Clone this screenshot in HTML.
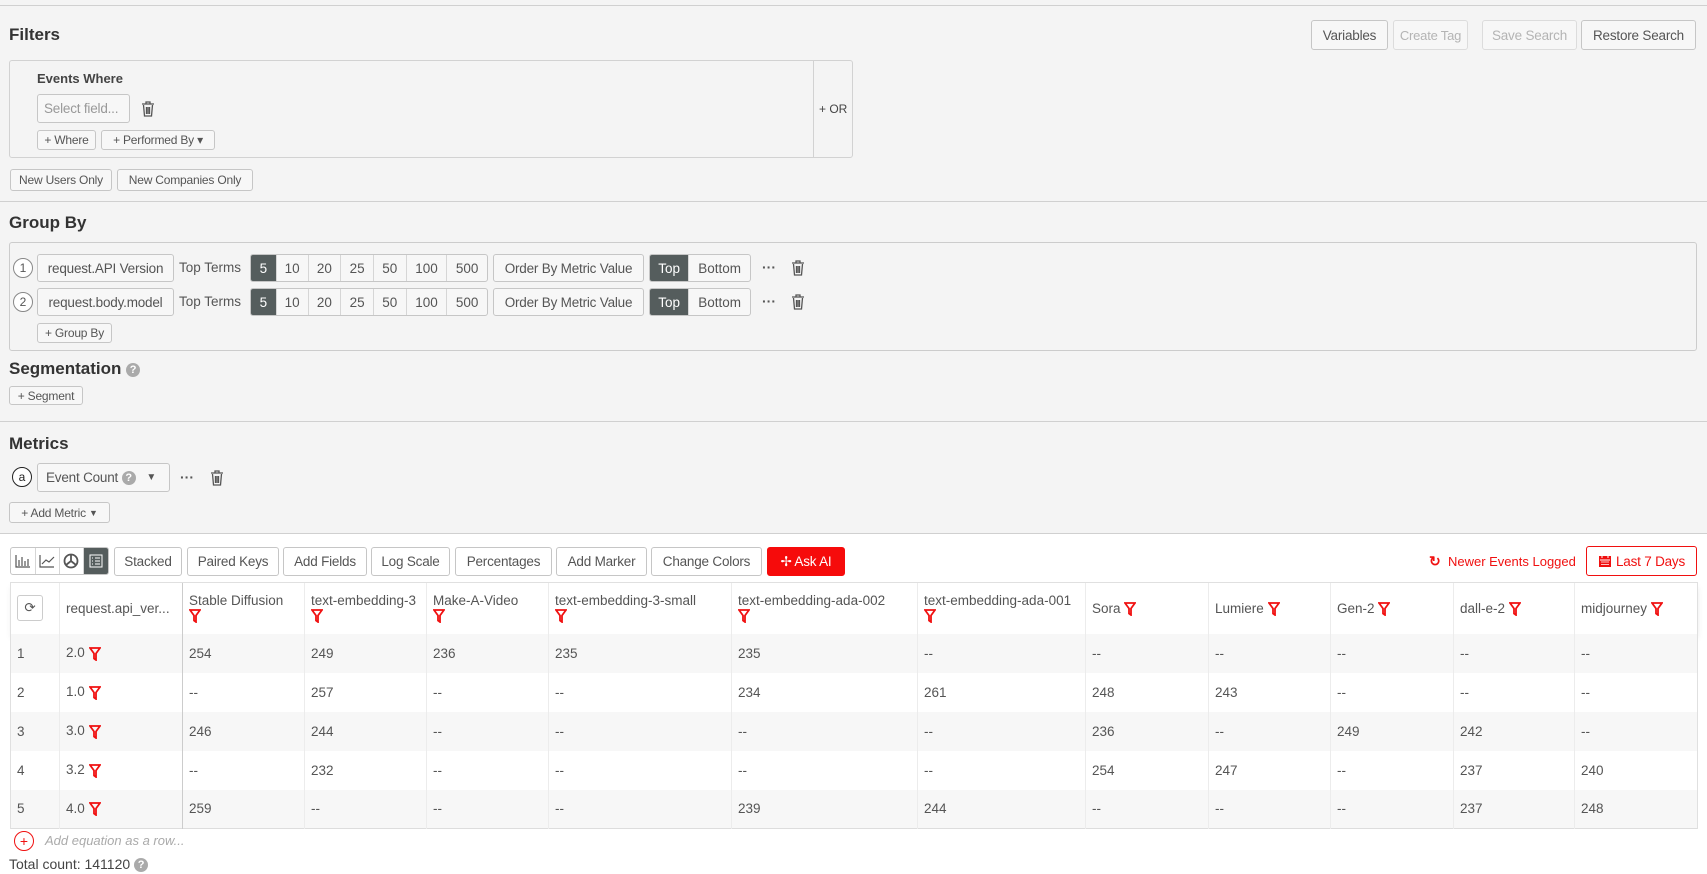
<!DOCTYPE html>
<html><head><meta charset="utf-8">
<style>
*{box-sizing:border-box;margin:0;padding:0}
body{width:1707px;height:874px;position:relative;overflow:hidden;background:#fff;font-family:"Liberation Sans",sans-serif;font-size:14px;color:#555}
.a{position:absolute}
.gray{position:absolute;left:0;top:0;width:1707px;height:533px;background:#f4f4f4}
.hl{position:absolute;left:0;width:1707px;height:1px;background:#d0d0d0}
.h{position:absolute;font-weight:bold;font-size:17px;color:#333}
.b{position:absolute;border:1px solid #c6c6c6;border-radius:3px;background:#f7f7f7;display:flex;align-items:center;justify-content:center;white-space:nowrap;color:#555;font-size:13.5px;letter-spacing:-.2px}
.dis{color:#b4b4b4;border-color:#dcdcdc}
.sm{font-size:12px}
.num{position:absolute;width:20px;height:20px;border:1px solid #888;border-radius:50%;font-size:12px;display:flex;align-items:center;justify-content:center;background:#fff}
.grp{position:absolute;display:flex;border:1px solid #c6c6c6;border-radius:3px;background:#f7f7f7;overflow:hidden;font-size:13.5px}
.grp span{display:flex;align-items:center;justify-content:center;border-right:1px solid #d6d6d6;height:100%}
.grp span:last-child{border-right:none}
.on{background:#555d5d;color:#fff}
.q{display:inline-block;width:14px;height:14px;border-radius:50%;background:#aaa;color:#fff;font-size:11px;text-align:center;line-height:14px;font-weight:bold;vertical-align:middle}
table{position:absolute;left:10px;top:582px;width:1687px;border-collapse:collapse;table-layout:fixed;font-size:13.5px}
td,th{font-weight:normal;text-align:left;padding:0 6px;vertical-align:middle;border-left:1px solid #ececec;white-space:nowrap;overflow:hidden}
th{height:51px;background:#fff;color:#555}
td{height:39px}
tr.o td{background:#f7f7f7}
tr.e td{background:#fff}
.fx{display:inline-block;vertical-align:middle}
</style></head><body>
<div class="gray"></div>
<div class="hl" style="top:5px"></div>
<div class="hl" style="top:201px"></div>
<div class="hl" style="top:421px"></div>
<div class="hl" style="top:533px"></div>

<div class="h" style="left:9px;top:25px">Filters</div>
<div class="b" style="left:1311px;top:20px;width:77px;height:30px">Variables</div>
<div class="b dis" style="left:1393px;top:20px;width:75px;height:30px;font-size:13px">Create Tag</div>
<div class="b dis" style="left:1482px;top:20px;width:95px;height:30px">Save Search</div>
<div class="b" style="left:1581px;top:20px;width:115px;height:30px">Restore Search</div>

<div class="a" style="left:9px;top:60px;width:844px;height:98px;border:1px solid #d2d2d2;border-radius:3px"></div>
<div class="a" style="left:813px;top:60px;width:1px;height:98px;background:#d2d2d2"></div>
<div class="a sm" style="left:819px;top:102px;color:#444">+ OR</div>
<div class="a" style="left:37px;top:71px;font-weight:bold;font-size:13px;color:#444">Events Where</div>
<div class="b" style="left:37px;top:94px;width:93px;height:29px;color:#999;background:#f7f7f7;justify-content:flex-start;padding-left:6px">Select field...</div>
<svg class="a" style="left:141px;top:101px" width="14" height="16" viewBox="0 0 14 16"><path d="M1 3h12M5 3V1h4v2M2.5 4l1 11h7l1-11M5.5 6v7M7 6v7M8.5 6v7" stroke="#555" stroke-width="1.3" fill="none"/></svg>
<div class="b sm" style="left:37px;top:130px;width:59px;height:20px">+ Where</div>
<div class="b sm" style="left:101px;top:130px;width:114px;height:20px">+ Performed By ▾</div>
<div class="b sm" style="left:10px;top:169px;width:102px;height:22px">New Users Only</div>
<div class="b sm" style="left:117px;top:169px;width:136px;height:22px">New Companies Only</div>

<div class="h" style="left:9px;top:213px">Group By</div>
<div class="a" style="left:9px;top:242px;width:1688px;height:109px;border:1px solid #ccc;border-radius:3px"></div>

<div class="num" style="left:13px;top:258px">1</div>
<div class="b" style="left:37px;top:254px;width:137px;height:28px">request.API Version</div>
<div class="a" style="left:179px;top:260px;font-size:13.5px">Top Terms</div>
<div class="grp" style="left:250px;top:254px;width:238px;height:28px"><span class="on" style="width:26px">5</span><span style="width:32px">10</span><span style="width:33px">20</span><span style="width:33px">25</span><span style="width:33px">50</span><span style="width:41px">100</span><span style="width:40px">500</span></div>
<div class="b" style="left:493px;top:254px;width:151px;height:28px">Order By Metric Value</div>
<div class="grp" style="left:649px;top:254px;width:102px;height:28px"><span class="on" style="width:40px">Top</span><span style="width:62px">Bottom</span></div>
<div class="a" style="left:762px;top:259px;font-weight:bold">···</div>
<svg class="a" style="left:791px;top:260px" width="14" height="16" viewBox="0 0 14 16"><path d="M1 3h12M5 3V1h4v2M2.5 4l1 11h7l1-11M5.5 6v7M7 6v7M8.5 6v7" stroke="#555" stroke-width="1.3" fill="none"/></svg>

<div class="num" style="left:13px;top:292px">2</div>
<div class="b" style="left:37px;top:288px;width:137px;height:28px">request.body.model</div>
<div class="a" style="left:179px;top:294px;font-size:13.5px">Top Terms</div>
<div class="grp" style="left:250px;top:288px;width:238px;height:28px"><span class="on" style="width:26px">5</span><span style="width:32px">10</span><span style="width:33px">20</span><span style="width:33px">25</span><span style="width:33px">50</span><span style="width:41px">100</span><span style="width:40px">500</span></div>
<div class="b" style="left:493px;top:288px;width:151px;height:28px">Order By Metric Value</div>
<div class="grp" style="left:649px;top:288px;width:102px;height:28px"><span class="on" style="width:40px">Top</span><span style="width:62px">Bottom</span></div>
<div class="a" style="left:762px;top:293px;font-weight:bold">···</div>
<svg class="a" style="left:791px;top:294px" width="14" height="16" viewBox="0 0 14 16"><path d="M1 3h12M5 3V1h4v2M2.5 4l1 11h7l1-11M5.5 6v7M7 6v7M8.5 6v7" stroke="#555" stroke-width="1.3" fill="none"/></svg>
<div class="b sm" style="left:37px;top:323px;width:75px;height:20px">+ Group By</div>

<div class="h" style="left:9px;top:359px">Segmentation <span class="q">?</span></div>
<div class="b sm" style="left:9px;top:386px;width:74px;height:19px">+ Segment</div>

<div class="h" style="left:9px;top:434px">Metrics</div>
<div class="num" style="left:12px;top:467px;border:1.5px solid #222;color:#222">a</div>
<div class="b" style="left:37px;top:463px;width:133px;height:29px;justify-content:flex-start;padding-left:8px">Event Count&nbsp;<span class="q">?</span>&nbsp;&nbsp;&nbsp;<span style="font-size:10px">▼</span></div>
<div class="a" style="left:180px;top:469px;font-weight:bold">···</div>
<svg class="a" style="left:210px;top:470px" width="14" height="16" viewBox="0 0 14 16"><path d="M1 3h12M5 3V1h4v2M2.5 4l1 11h7l1-11M5.5 6v7M7 6v7M8.5 6v7" stroke="#555" stroke-width="1.3" fill="none"/></svg>
<div class="b sm" style="left:9px;top:502px;width:101px;height:21px">+ Add Metric&nbsp;<span style="font-size:9px">▼</span></div>

<div class="grp" style="left:10px;top:547px;width:99px;height:28px;background:#fff">
<span style="width:25px"><svg width="16" height="14"><path d="M1 1v12h14M4 12V6M7 12V3M10 12V7M13 12V5" stroke="#555" stroke-width="1.2" fill="none"/></svg></span>
<span style="width:25px"><svg width="16" height="14"><path d="M1 1v12h14M3 10l4-4 3 2 5-5" stroke="#555" stroke-width="1.2" fill="none"/></svg></span>
<span style="width:24px"><svg width="16" height="16"><circle cx="8" cy="8" r="6.5" stroke="#555" stroke-width="1.8" fill="none"/><path d="M8 8V1.5M8 8l-5 4M8 8l5 4" stroke="#555" stroke-width="1.8"/></svg></span>
<span class="on" style="width:25px"><svg width="14" height="14"><rect x="1" y="1" width="12" height="12" stroke="#fff" fill="none"/><path d="M3 4h1M6 4h5M3 7h1M6 7h5M3 10h1M6 10h5" stroke="#fff"/></svg></span>
</div>
<div class="b" style="left:114px;top:547px;width:68px;height:29px;background:#fff">Stacked</div>
<div class="b" style="left:187px;top:547px;width:92px;height:29px;background:#fff">Paired Keys</div>
<div class="b" style="left:283px;top:547px;width:84px;height:29px;background:#fff">Add Fields</div>
<div class="b" style="left:371px;top:547px;width:79px;height:29px;background:#fff">Log Scale</div>
<div class="b" style="left:455px;top:547px;width:97px;height:29px;background:#fff">Percentages</div>
<div class="b" style="left:556px;top:547px;width:91px;height:29px;background:#fff">Add Marker</div>
<div class="b" style="left:651px;top:547px;width:111px;height:29px;background:#fff">Change Colors</div>
<div class="b" style="left:767px;top:547px;width:78px;height:29px;background:#f60b0b;border-color:#f60b0b;color:#fff">✢ Ask AI</div>
<div class="a" style="left:1429px;top:553px;color:#f01010;font-size:13px"><b style="font-size:14px">↻</b>&nbsp; Newer Events Logged</div>
<div class="b" style="left:1586px;top:546px;width:111px;height:30px;background:#fff;border-color:#f01010;color:#f01010">
<svg width="14" height="14" style="margin-right:4px"><rect x="1" y="2" width="12" height="11" fill="#f01010"/><path d="M2 6h10M4 1v3M10 1v3" stroke="#fff" stroke-width="1"/><path d="M3 8h8M3 10.5h8" stroke="#fff" stroke-width=".8"/></svg>Last 7 Days</div>

<svg width="0" height="0" style="position:absolute"><defs><symbol id="f" viewBox="0 0 12 14"><path d="M1 1h10L7 6.5V13L5 11.5V6.5Z" fill="none" stroke="#f01010" stroke-width="1.8"/></symbol></defs></svg>

<table>
<colgroup><col style="width:49px"><col style="width:123px"><col style="width:122px"><col style="width:122px"><col style="width:122px"><col style="width:183px"><col style="width:186px"><col style="width:168px"><col style="width:123px"><col style="width:122px"><col style="width:123px"><col style="width:121px"><col style="width:123px"></colgroup>
<tr style="box-shadow:0 4px 6px rgba(0,0,0,.08)">
<th style="border-left:1px solid #e0e0e0;border-top:1px solid #e0e0e0"><div style="width:26px;height:26px;border:1px solid #ccc;border-radius:3px;display:flex;align-items:center;justify-content:center">⟳</div></th>
<th style="border-top:1px solid #e0e0e0">request.api_ver...</th>
<th style="border-left:1px solid #ccc;border-top:1px solid #e0e0e0">Stable Diffusion<br><svg class="fx" width="12" height="14"><use href="#f"/></svg></th>
<th style="border-top:1px solid #e0e0e0">text-embedding-3<br><svg class="fx" width="12" height="14"><use href="#f"/></svg></th>
<th style="border-top:1px solid #e0e0e0">Make-A-Video<br><svg class="fx" width="12" height="14"><use href="#f"/></svg></th>
<th style="border-top:1px solid #e0e0e0">text-embedding-3-small<br><svg class="fx" width="12" height="14"><use href="#f"/></svg></th>
<th style="border-top:1px solid #e0e0e0">text-embedding-ada-002<br><svg class="fx" width="12" height="14"><use href="#f"/></svg></th>
<th style="border-top:1px solid #e0e0e0">text-embedding-ada-001<br><svg class="fx" width="12" height="14"><use href="#f"/></svg></th>
<th style="border-top:1px solid #e0e0e0">Sora <svg class="fx" width="12" height="14"><use href="#f"/></svg></th>
<th style="border-top:1px solid #e0e0e0">Lumiere <svg class="fx" width="12" height="14"><use href="#f"/></svg></th>
<th style="border-top:1px solid #e0e0e0">Gen-2 <svg class="fx" width="12" height="14"><use href="#f"/></svg></th>
<th style="border-top:1px solid #e0e0e0">dall-e-2 <svg class="fx" width="12" height="14"><use href="#f"/></svg></th>
<th style="border-top:1px solid #e0e0e0;border-right:1px solid #e0e0e0">midjourney <svg class="fx" width="12" height="14"><use href="#f"/></svg></th>
</tr>
<tr class="o"><td style="border-left:1px solid #e0e0e0">1</td><td>2.0 <svg class="fx" width="12" height="14"><use href="#f"/></svg></td><td style="border-left:1px solid #ccc">254</td><td>249</td><td>236</td><td>235</td><td>235</td><td>--</td><td>--</td><td>--</td><td>--</td><td>--</td><td style="border-right:1px solid #e0e0e0">--</td></tr>
<tr class="e"><td style="border-left:1px solid #e0e0e0">2</td><td>1.0 <svg class="fx" width="12" height="14"><use href="#f"/></svg></td><td style="border-left:1px solid #ccc">--</td><td>257</td><td>--</td><td>--</td><td>234</td><td>261</td><td>248</td><td>243</td><td>--</td><td>--</td><td style="border-right:1px solid #e0e0e0">--</td></tr>
<tr class="o"><td style="border-left:1px solid #e0e0e0">3</td><td>3.0 <svg class="fx" width="12" height="14"><use href="#f"/></svg></td><td style="border-left:1px solid #ccc">246</td><td>244</td><td>--</td><td>--</td><td>--</td><td>--</td><td>236</td><td>--</td><td>249</td><td>242</td><td style="border-right:1px solid #e0e0e0">--</td></tr>
<tr class="e"><td style="border-left:1px solid #e0e0e0">4</td><td>3.2 <svg class="fx" width="12" height="14"><use href="#f"/></svg></td><td style="border-left:1px solid #ccc">--</td><td>232</td><td>--</td><td>--</td><td>--</td><td>--</td><td>254</td><td>247</td><td>--</td><td>237</td><td style="border-right:1px solid #e0e0e0">240</td></tr>
<tr class="o" style="border-bottom:1px solid #ddd"><td style="border-left:1px solid #e0e0e0">5</td><td>4.0 <svg class="fx" width="12" height="14"><use href="#f"/></svg></td><td style="border-left:1px solid #ccc">259</td><td>--</td><td>--</td><td>--</td><td>239</td><td>244</td><td>--</td><td>--</td><td>--</td><td>237</td><td style="border-right:1px solid #e0e0e0">248</td></tr>
</table>

<div class="a" style="left:14px;top:831px;width:20px;height:20px;border:1.5px solid #f01010;border-radius:50%;color:#f01010;font-size:14px;display:flex;align-items:center;justify-content:center">+</div>
<div class="a" style="left:45px;top:833px;color:#aaa;font-style:italic;font-size:13px">Add equation as a row...</div>
<div class="a" style="left:9px;top:856px;color:#444">Total count: 141120 <span class="q">?</span></div>
</body></html>
